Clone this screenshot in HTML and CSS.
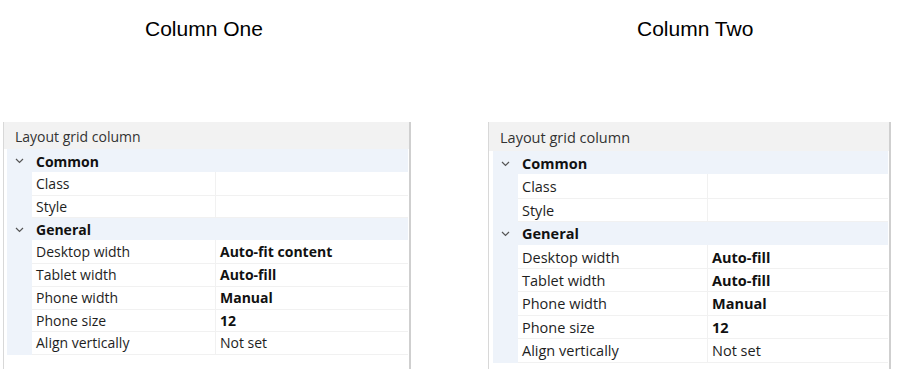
FILE: index.html
```html
<!DOCTYPE html>
<html lang="en">
<head>
    <meta charset="UTF-8">
    <meta name="viewport" content="width=device-width, initial-scale=1.0">
    <title>Layout grid column</title>
    <link rel="stylesheet" href="styles.css">
</head>
<body>
    <div class="page">
        <div class="column col-one">
            <div class="col-title">Column One</div>
            <div class="panel">
                <div class="panel-header">Layout grid column</div>
                <div class="props">
                    <div class="group">
                        <span class="chevron"><svg width="9" height="6" viewBox="0 0 9 6"><polyline points="1,1 4.5,4.5 8,1" fill="none" stroke="#555" stroke-width="1.2"/></svg></span>
                        <span class="group-name">Common</span>
                    </div>
                    <div class="prop"><span class="gutter"></span><span class="name">Class</span><span class="value"></span></div>
                    <div class="prop"><span class="gutter"></span><span class="name">Style</span><span class="value"></span></div>
                    <div class="group">
                        <span class="chevron"><svg width="9" height="6" viewBox="0 0 9 6"><polyline points="1,1 4.5,4.5 8,1" fill="none" stroke="#555" stroke-width="1.2"/></svg></span>
                        <span class="group-name">General</span>
                    </div>
                    <div class="prop"><span class="gutter"></span><span class="name">Desktop width</span><span class="value set">Auto-fit content</span></div>
                    <div class="prop"><span class="gutter"></span><span class="name">Tablet width</span><span class="value set">Auto-fill</span></div>
                    <div class="prop"><span class="gutter"></span><span class="name">Phone width</span><span class="value set">Manual</span></div>
                    <div class="prop"><span class="gutter"></span><span class="name">Phone size</span><span class="value set">12</span></div>
                    <div class="prop"><span class="gutter"></span><span class="name">Align vertically</span><span class="value">Not set</span></div>
                </div>
            </div>
        </div>
        <div class="column col-two">
            <div class="col-title">Column Two</div>
            <div class="panel">
                <div class="panel-header">Layout grid column</div>
                <div class="props">
                    <div class="group">
                        <span class="chevron"><svg width="9" height="6" viewBox="0 0 9 6"><polyline points="1,1 4.5,4.5 8,1" fill="none" stroke="#555" stroke-width="1.2"/></svg></span>
                        <span class="group-name">Common</span>
                    </div>
                    <div class="prop"><span class="gutter"></span><span class="name">Class</span><span class="value"></span></div>
                    <div class="prop"><span class="gutter"></span><span class="name">Style</span><span class="value"></span></div>
                    <div class="group">
                        <span class="chevron"><svg width="9" height="6" viewBox="0 0 9 6"><polyline points="1,1 4.5,4.5 8,1" fill="none" stroke="#555" stroke-width="1.2"/></svg></span>
                        <span class="group-name">General</span>
                    </div>
                    <div class="prop"><span class="gutter"></span><span class="name">Desktop width</span><span class="value set">Auto-fill</span></div>
                    <div class="prop"><span class="gutter"></span><span class="name">Tablet width</span><span class="value set">Auto-fill</span></div>
                    <div class="prop"><span class="gutter"></span><span class="name">Phone width</span><span class="value set">Manual</span></div>
                    <div class="prop"><span class="gutter"></span><span class="name">Phone size</span><span class="value set">12</span></div>
                    <div class="prop"><span class="gutter"></span><span class="name">Align vertically</span><span class="value">Not set</span></div>
                </div>
            </div>
        </div>
    </div>
</body>
</html>
```

FILE: styles.css
```css
body {
    margin: 0;
    background: white;
    font-family: "Open Sans", "Noto Sans", sans-serif;
    color: #1e1e1e;
}
.page {
    display: flex;
    height: 369px;
    overflow: hidden;
}
.column {
    display: flex;
    flex-direction: column;
    height: 100%;
    --font: 14px;
    --header-h: 27px;
    --row-h: 22.8px;
    --label-w: 183px;
}
.col-one {
    margin-left: 3px;
    width: 408px;
}
.col-two {
    margin-left: 77px;
    width: 403px;
    --font: 14.5px;
    --header-h: 29px;
    --row-h: 23.4px;
    --label-w: 189px;
}
.col-title {
    font-family: "Liberation Sans", Arial, sans-serif;
    font-size: 21px;
    line-height: 24px;
    color: #000;
    padding-top: 17px;
    margin-bottom: 81px;
}
.col-one .col-title {
    padding-left: 142px;
}
.col-two .col-title {
    padding-left: 149px;
}
.panel {
    flex: 1;
    border-left: 1px solid #d8d8d8;
    border-right: 2px solid #cfcfcf;
    font-size: var(--font);
}
.panel-header {
    background: #f2f2f2;
    height: var(--header-h);
    line-height: var(--header-h);
    padding-left: 11px;
    padding-top: 1px;
    color: #333;
    box-sizing: border-box;
}
.props {
    margin-left: 3px;
    margin-right: 1px;
}
.col-two .props {
    margin-left: 4px;
}
.group {
    display: flex;
    align-items: center;
    height: var(--row-h);
    padding-top: 2px;
    box-sizing: border-box;
    background: #eef3fa;
}
.chevron {
    width: 25px;
    display: flex;
    justify-content: center;
    align-items: center;
}
.group-name {
    font-weight: bold;
    color: #111;
    padding-left: 4px;
}
.prop {
    display: grid;
    grid-template-columns: 25px var(--label-w) 1fr;
    height: var(--row-h);
}
.prop span {
    line-height: calc(var(--row-h) - 2px);
    padding-top: 2px;
    box-sizing: border-box;
    white-space: nowrap;
}
.gutter {
    background: #eef3fa;
}
.name {
    padding-left: 4px;
    border-bottom: 1px solid #f1f1f1;
}
.value {
    padding-left: 4px;
    border-left: 1px solid #f1f1f1;
    border-bottom: 1px solid #f1f1f1;
}
.value.set {
    font-weight: bold;
    color: #111;
}
```
